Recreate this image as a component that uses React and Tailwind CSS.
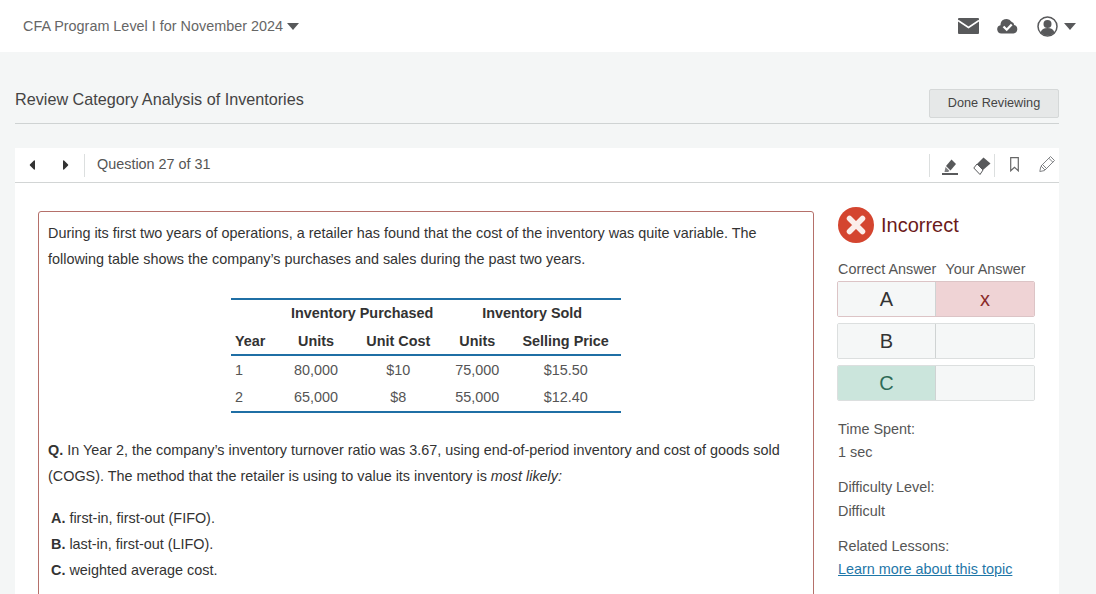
import { FaCaretLeft, FaCaretRight } from 'react-icons/fa';

function Caret({ w = 12, h = 7 }) {
  return (
    <svg width={w} height={h} viewBox="0 0 12 7" preserveAspectRatio="none">
      <path d="M0 0h12L6 7z" fill="#58595b" />
    </svg>
  );
}

function Mail() {
  return (
    <svg width="21" height="16" viewBox="0 0 21 16">
      <rect width="21" height="16" rx="1" fill="#58595b" />
      <path d="M0 2.500l10.500 7 10.500-7" fill="none" stroke="#fff" strokeWidth="1.600" />
    </svg>
  );
}

function CloudCheck() {
  return (
    <svg width="21" height="16" viewBox="0 0 21 16">
      <path d="M4.500 15.500a4.200 4.200 0 0 1-1-8.300A6 6 0 0 1 14.500 3.700a3.600 3.600 0 0 1 2.700 3.400 4.300 4.300 0 0 1-.7 8.400z" fill="#58595b" />
      <path d="M6.500 8.500l3.200 3.200 5-5.200" fill="none" stroke="#fff" strokeWidth="2.300" />
    </svg>
  );
}

function UserCircle() {
  return (
    <svg width="21" height="21" viewBox="0 0 21 21">
      <circle cx="10.500" cy="10.500" r="9.500" fill="#fff" stroke="#58595b" strokeWidth="1.500" />
      <circle cx="10.500" cy="8" r="4" fill="#58595b" />
      <path d="M3.500 16.500c1-3.400 3.400-4.600 7-4.600s6 1.200 7 4.600a9.500 9.500 0 0 1-14 0z" fill="#58595b" />
    </svg>
  );
}

function Highlighter() {
  return (
    <svg width="16" height="16" viewBox="0 0 16 16">
      <path d="M9.500 0.500L14 5l-5.500 6.500-4.500-4.500z" fill="#58595b" />
      <path d="M3.500 8l4 4-1.500 1H2.500z" fill="#7d7e80" />
      <rect y="14" width="16" height="2" fill="#58595b" />
    </svg>
  );
}

function Eraser() {
  return (
    <svg width="18" height="18" viewBox="0 0 18 18">
      <path d="M10.500 0.500L17.500 6.500 10 13 4 7z" fill="#58595b" />
      <path d="M4 7l6 6-3 4.500L0.800 11z" fill="#fff" stroke="#58595b" strokeWidth="1" />
    </svg>
  );
}

function BookmarkOutline() {
  return (
    <svg width="9" height="15" viewBox="0 0 9 15">
      <path d="M.7.600h7.600v13.200L4.500 10.300.7 13.800z" fill="none" stroke="#666" strokeWidth="1.200" />
    </svg>
  );
}

function PencilOutline() {
  return (
    <svg width="16" height="18" viewBox="0 0 16 18">
      <path d="M11.500 1.500l4 4L6 15l-4-4zM1.800 11.500L.8 16.500l5-1M9.800 3.200l4 4M4 10l3 3" fill="none" stroke="#808285" strokeWidth="1" />
    </svg>
  );
}

function IncorrectMark() {
  return (
    <svg width="36" height="36" viewBox="0 0 36 36">
      <circle cx="18" cy="18" r="18" fill="#d4452f" />
      <path d="M11.500 11.500l13 13M24.500 11.500l-13 13" fill="none" stroke="#fbeeea" strokeWidth="5.500" strokeLinecap="round" />
    </svg>
  );
}

function AnswerRow({ letter, left = 'bg-[#f5f7f7]', right = 'bg-[#f5f7f7]', mark, border = 'border-[#dcdfdf]', letterColor = 'text-[#333]' }) {
  return (
    <div className={`flex h-[36px] w-[198px] overflow-hidden rounded-[2px] border ${border}`}>
      <div className={`flex w-[98px] items-center justify-center border-r border-[#cfd3d3] text-[20px] ${left} ${letterColor}`}>{letter}</div>
      <div className={`flex flex-1 items-center justify-center text-[20px] text-[#8a2a2a] ${right}`}>{mark}</div>
    </div>
  );
}

const rows = [
  ['1', '80,000', '$10', '75,000', '$15.50'],
  ['2', '65,000', '$8', '55,000', '$12.40'],
];

export default function App() {
  return (
    <div className="h-[594px] w-[1096px] overflow-hidden bg-[#f4f6f6] font-['Liberation_Sans',Arial,sans-serif] text-[#333]">
      <header className="flex h-[52px] items-center justify-between bg-white pl-[23px] pr-[20px]">
        <div className="mt-[2px] flex items-center gap-[4px] text-[14.4px] text-[#666]">
          <span>CFA Program Level I for November 2024</span>
          <Caret />
        </div>
        <div className="flex items-center">
          <Mail />
          <div className="ml-[18px]"><CloudCheck /></div>
          <div className="ml-[19px]"><UserCircle /></div>
          <div className="ml-[6px]"><Caret /></div>
        </div>
      </header>

      <div className="ml-[15px] w-[1044px]">
        <div className="flex h-[72px] items-end justify-between border-b border-[#cfd3d3]">
          <h1 className="mb-[12px] text-[16.200px] text-[#444]">Review Category Analysis of Inventories</h1>
          <button className="mb-[5px] h-[29px] w-[130px] rounded-[2px] border border-[#d5d8d8] bg-[#e6e8e8] text-[12.700px] text-[#444]">Done Reviewing</button>
        </div>

        <div className="mt-[24px] bg-white">
          <div className="flex h-[35px] items-center justify-between border-b border-[#d2d5d5] pr-[4px]">
            <div className="flex items-center">
              <FaCaretLeft size={16} className="ml-[9px]" />
              <FaCaretRight size={16} className="ml-[18px]" />
              <div className="ml-[10px] h-[23px] w-px bg-[#dcdfdf]" />
              <span className="ml-[12px] text-[14.4px] text-[#555]">Question 27 of 31</span>
            </div>
            <div className="flex items-center">
              <div className="h-[23px] w-px bg-[#dcdfdf]" />
              <div className="ml-[12px] mt-[3px]"><Highlighter /></div>
              <div className="ml-[15px] mt-[2px]"><Eraser /></div>
              <div className="ml-[3px] h-[23px] w-px bg-[#dcdfdf]" />
              <div className="ml-[15px] -mt-[2px]"><BookmarkOutline /></div>
              <div className="ml-[20px] -mt-[2px]"><PencilOutline /></div>
            </div>
          </div>

          <div className="flex h-[412px] items-start pl-[23px] pt-[28px]">
            <div className="h-[420px] w-[776px] shrink-0 rounded-[3px] border border-[#b5706a] px-[9px] pt-[8px] text-[14.4px] leading-[26px]">
              <p>During its first two years of operations, a retailer has found that the cost of the inventory was quite variable. The following table shows the company’s purchases and sales during the past two years.</p>

              <table className="mt-[26px] ml-[183px] w-[390px] border-y-2 border-[#1f6fa5] text-center leading-[20px]">
                <thead className="font-bold">
                  <tr>
                    <th />
                    <th colSpan={2} className="h-[28px] whitespace-nowrap pb-[2px] pl-[22px]">Inventory Purchased</th>
                    <th colSpan={2} className="h-[28px] whitespace-nowrap pb-[2px] pl-[10px]">Inventory Sold</th>
                  </tr>
                  <tr className="border-b-2 border-[#1f6fa5]">
                    <th className="h-[28px] w-[38px] pl-[4px] pt-[1px] text-left">Year</th>
                    <th className="w-[94px] pt-[1px]">Units</th>
                    <th className="w-[70px] pt-[1px]">Unit Cost</th>
                    <th className="w-[88px] pt-[1px]">Units</th>
                    <th className="whitespace-nowrap pt-[1px] pr-[11px]">Selling Price</th>
                  </tr>
                </thead>
                <tbody className="text-[#555]">
                  {rows.map((r, i) => (
                    <tr key={r[0]} className={i ? 'h-[29px]' : 'h-[28px]'}>
                      <td className="pl-[4px] text-left">{r[0]}</td>
                      <td>{r[1]}</td>
                      <td>{r[2]}</td>
                      <td>{r[3]}</td>
                      <td className="pr-[11px]">{r[4]}</td>
                    </tr>
                  ))}
                </tbody>
              </table>

              <p className="mt-[24px]"><b>Q.</b> In Year 2, the company’s inventory turnover ratio was 3.67, using end-of-period inventory and cost of goods sold (COGS). The method that the retailer is using to value its inventory is <i>most likely:</i></p>

              <ul className="mt-[16px] pl-[3px]">
                <li><b>A.</b> first-in, first-out (FIFO).</li>
                <li><b>B.</b> last-in, first-out (LIFO).</li>
                <li><b>C.</b> weighted average cost.</li>
              </ul>
            </div>

            <aside className="ml-[23px] w-[200px] text-[14.4px] text-[#555]">
              <div className="-mt-[4px] ml-px flex items-center gap-[7px]">
                <IncorrectMark />
                <span className="text-[20px] text-[#6b1a1a]">Incorrect</span>
              </div>
              <div className="ml-px mt-[17px] flex h-[20px] items-center gap-[9px] whitespace-nowrap">
                <span>Correct Answer</span>
                <span>Your Answer</span>
              </div>
              <div className="mt-[1px] flex flex-col gap-[6px]">
                <AnswerRow letter="A" right="bg-[#efd3d5]" mark="x" border="border-[#dcc4c6]" />
                <AnswerRow letter="B" />
                <AnswerRow letter="C" left="bg-[#cbe5dc]" letterColor="text-[#2e6b57]" />
              </div>
              <div className="ml-px mt-[17px] leading-[23px]">
                <div>Time Spent:</div>
                <div>1 sec</div>
              </div>
              <div className="ml-px mt-[11px] leading-[24px]">
                <div>Difficulty Level:</div>
                <div>Difficult</div>
              </div>
              <div className="ml-px mt-[12px] leading-[23px]">
                <div>Related Lessons:</div>
                <a className="text-[#1f77a8] underline">Learn more about this topic</a>
              </div>
            </aside>
          </div>
        </div>
      </div>
    </div>
  );
}
